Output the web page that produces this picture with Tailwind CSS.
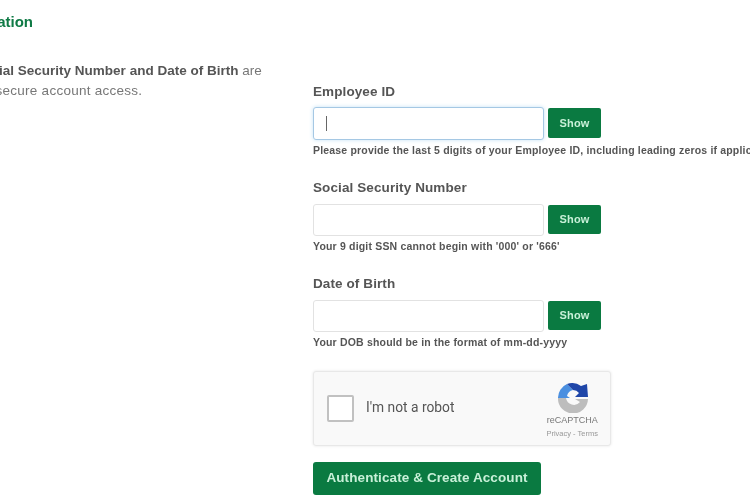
<!DOCTYPE html>
<html lang="en">
<head>
    <meta charset="UTF-8">
    <title>Account Verification</title>
    <script src="https://cdn.jsdelivr.net/npm/@tailwindcss/browser@4"></script>
</head>
<body class="bg-white overflow-hidden font-['Liberation_Sans',Arial,sans-serif]">
    <div class="w-[750px] h-[499px] overflow-hidden flex blur-[0.5px]">
        <!-- left column, runs off the left edge -->
        <div class="w-[313px] shrink-0 overflow-hidden pt-[13px]">
            <h2 class="ml-[-112px] text-[15px] leading-[18px] font-bold text-[#0f7a45] whitespace-nowrap">Account Verification</h2>
            <p class="ml-[-247px] mt-[30px] text-[13.5px] leading-[20px] text-[#777] whitespace-nowrap"><b class="text-[#555]">Please confirm your Employee ID, Social Security Number and Date of Birth</b> are</p>
            <p class="ml-[-211px] text-[13.5px] leading-[20px] tracking-[0.25px] text-[#777] whitespace-nowrap">Information is required to ensure secure account access.</p>
        </div>

        <!-- form -->
        <div class="flex-1 min-w-0 pt-[84px]">
            <label class="block text-[13.5px] leading-[16px] font-bold tracking-[0.1px] text-[#555]">Employee ID</label>
            <div class="flex items-center gap-[4px] mt-[7px]">
                <div class="w-[231px] h-[33px] rounded-[3px] border border-[#a5c8e4] shadow-[0_0_4px_#c5e2f5] bg-white flex items-center pl-[12px]">
                    <span class="w-px h-[15px] bg-[#666]"></span>
                </div>
                <button class="w-[53px] h-[30px] mt-[-1px] rounded-[2px] bg-[#0a7a41] text-[#c8f0d8] text-[11px] font-bold tracking-[0.2px]">Show</button>
            </div>
            <p class="mt-[4px] text-[10.5px] leading-[12px] font-bold tracking-[0.18px] text-[#555] whitespace-nowrap">Please provide the last 5 digits of your Employee ID, including leading zeros if applicable.</p>

            <label class="block mt-[24px] text-[13.5px] leading-[16px] font-bold tracking-[0.1px] text-[#555]">Social Security Number</label>
            <div class="flex items-center gap-[4px] mt-[8px]">
                <div class="w-[231px] h-[32px] rounded-[3px] border border-[#e2e2e2] bg-white"></div>
                <button class="w-[53px] h-[29px] mt-[-1px] rounded-[2px] bg-[#0a7a41] text-[#c8f0d8] text-[11px] font-bold tracking-[0.2px]">Show</button>
            </div>
            <p class="mt-[4px] text-[10.5px] leading-[12px] font-bold tracking-[0.18px] text-[#555] whitespace-nowrap">Your 9 digit SSN cannot begin with '000' or '666'</p>

            <label class="block mt-[24px] text-[13.5px] leading-[16px] font-bold tracking-[0.1px] text-[#555]">Date of Birth</label>
            <div class="flex items-center gap-[4px] mt-[8px]">
                <div class="w-[231px] h-[32px] rounded-[3px] border border-[#e2e2e2] bg-white"></div>
                <button class="w-[53px] h-[29px] mt-[-1px] rounded-[2px] bg-[#0a7a41] text-[#c8f0d8] text-[11px] font-bold tracking-[0.2px]">Show</button>
            </div>
            <p class="mt-[4px] text-[10.5px] leading-[12px] font-bold tracking-[0.18px] text-[#555] whitespace-nowrap">Your DOB should be in the format of mm-dd-yyyy</p>

            <!-- recaptcha -->
            <div class="mt-[23px] w-[298px] h-[75px] rounded-[3px] border border-[#e8e8e8] bg-[#f9f9f9] shadow-[0_0_3px_#e5e5e5] flex items-center pl-[13px] pr-[12px]">
                <div class="w-[27px] h-[27px] rounded-[2px] border-2 border-[#c1c1c1] bg-white"></div>
                <span class="ml-[12px] mt-[-2px] text-[13.8px] text-[#555] font-['Roboto',sans-serif]">I'm not a robot</span>
                <div class="ml-auto flex flex-col items-center mt-[3px]">
                    <svg class="w-[30px] h-[30px] mr-[-2px]" viewBox="0 0 30 30">
                        <path d="M0 15 A15 15 0 0 1 9 1 L15 7 A8 8 0 0 0 9 13 L12 15 Z" fill="#4a8fe0"/>
                        <path d="M9 1 A15 15 0 0 1 23 3 L29 1 L30 14 L17 14 L21 10 A8 8 0 0 0 15 7 Z" fill="#1f46a8"/>
                        <path d="M0 15 L8 15 A8 8 0 0 0 22 19 L17 16 L30 16 A15 15 0 0 1 0 15 Z" fill="#bdbdbd"/>
                    </svg>
                    <span class="mt-[2px] text-[9px] leading-[11px] text-[#777]">reCAPTCHA</span>
                    <span class="mt-[3px] text-[7.5px] leading-[9px] text-[#999]">Privacy - Terms</span>
                </div>
            </div>

            <button class="block mt-[16px] w-[228px] h-[33px] pb-[1px] rounded-[3px] bg-[#0a7a41] text-[#c8f0d8] text-[13.5px] font-bold tracking-[0.1px]">Authenticate &amp; Create Account</button>
        </div>
    </div>
</body>
</html>
